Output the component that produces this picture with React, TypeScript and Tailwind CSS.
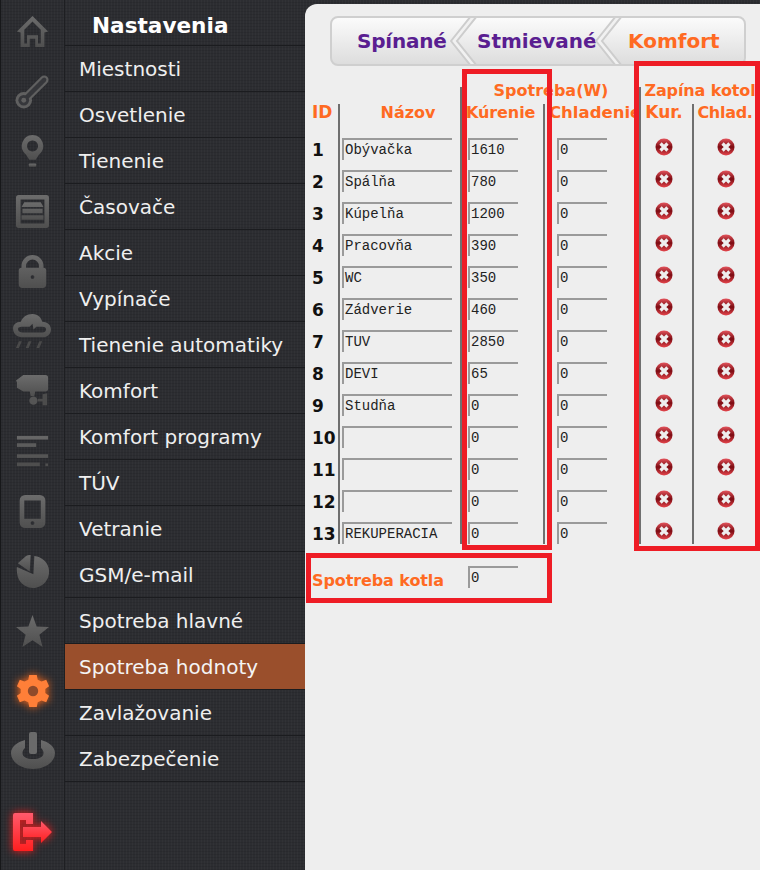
import type { ReactNode } from "react";

const menu = [
  "Miestnosti",
  "Osvetlenie",
  "Tienenie",
  "Časovače",
  "Akcie",
  "Vypínače",
  "Tienenie automatiky",
  "Komfort",
  "Komfort programy",
  "TÚV",
  "Vetranie",
  "GSM/e-mail",
  "Spotreba hlavné",
  "Spotreba hodnoty",
  "Zavlažovanie",
  "Zabezpečenie",
];

const rows = [
  { name: "Obývačka", heat: "1610" },
  { name: "Spálňa", heat: "780" },
  { name: "Kúpelňa", heat: "1200" },
  { name: "Pracovňa", heat: "390" },
  { name: "WC", heat: "350" },
  { name: "Zádverie", heat: "460" },
  { name: "TUV", heat: "2850" },
  { name: "DEVI", heat: "65" },
  { name: "Studňa", heat: "0" },
  { name: "", heat: "0" },
  { name: "", heat: "0" },
  { name: "", heat: "0" },
  { name: "REKUPERACIA", heat: "0" },
];

const RAIL = "url(#rail)";

function Icon({ children }: { children: ReactNode }) {
  return (
    <svg width="33" height="33" viewBox="0 0 36 36" fill={RAIL}>
      {children}
    </svg>
  );
}

const icons: ReactNode[] = [
  // home
  <Icon key="home">
    <path d="M18 1 L35 18 L31 19 L31 35 L21 35 L21 26 L15 26 L15 35 L5 35 L5 19 L1 18 Z M18 7 L9 16 L9 31 L12 31 L12 22 L24 22 L24 31 L27 31 L27 16 Z" fillRule="evenodd" />
  </Icon>,
  // thermometer
  <svg key="thermo" width="35" height="35" viewBox="0 0 36 36">
    <path d="M9 27 L30 6" stroke="#606060" strokeWidth="9" strokeLinecap="round" />
    <circle cx="9" cy="27" r="8.500" fill="#606060" />
    <path d="M9 27 L30 6" stroke="#36373b" strokeWidth="4.500" strokeLinecap="round" />
    <circle cx="9" cy="27" r="5.500" fill="#36373b" />
    <circle cx="9" cy="27" r="2.500" fill="#606060" />
  </svg>,
  // bulb
  <Icon key="bulb">
    <path d="M18 0 A12 12 0 0 1 25 21.500 L21.500 27 L14.500 27 L11 21.500 A12 12 0 0 1 18 0 Z M18 6 A6 6 0 1 0 18.010 6 Z" fillRule="evenodd" />
    <rect x="14" y="31" width="8" height="3.500" rx="1" />
  </Icon>,
  // shutter
  <Icon key="shutter">
    <path d="M3 0 H33 A3 3 0 0 1 36 3 V33 A3 3 0 0 1 33 36 H3 A3 3 0 0 1 0 33 V3 A3 3 0 0 1 3 0 Z M5 5 V31 H31 V5 Z" fillRule="evenodd" />
    <path d="M9 8 H27 L30 13 H6 Z M7 15 H29 V20 H7 Z M6 22 H30 L30 27 H6 Z" />
  </Icon>,
  // lock
  <Icon key="lock">
    <path d="M18 0 A12 12 0 0 1 30 12 V14 A3 3 0 0 1 33 17 V32 A4 4 0 0 1 29 36 H7 A4 4 0 0 1 3 32 V17 A3 3 0 0 1 6 14 V12 A12 12 0 0 1 18 0 Z M18 5 A7 7 0 0 0 11 12 V14 H25 V12 A7 7 0 0 0 18 5 Z M18 22 A2 2 0 1 0 18.010 22 Z" fillRule="evenodd" />
  </Icon>,
  // cloud with rain
  <svg key="cloud" width="39" height="35" viewBox="0 0 40 36" fill={RAIL}>
    <path d="M20 0 C26 0 29 4 30 8 C36 8 39 12 39 16 C39 21 35 24 31 24 H9 C4 24 0 20 0 15 C0 11 3 8 8 8 C10 3 14 0 20 0 Z M10 13 C6 13 5 14 5 15.500 C5 18 7 19 10 19 H30 C33 19 34 18 34 15.500 C34 14 33 13 30 13 H24 L21 16 L20 10 L17 13 Z" fillRule="evenodd" />
    <path d="M3 35 L6 28 L9 28 L6 35 Z M13 35 L16 28 L19 28 L16 35 Z M24 35 L27 28 L30 28 L27 35 Z" fill="#4a4a4a" />
  </svg>,
  // camera
  <Icon key="camera">
    <path d="M8 0 H32 A3 3 0 0 1 35 3 V15 A3 3 0 0 1 32 18 H21 L20 23 H16 L15 18 H8 L1 14 V8 L0 6 Z" />
    <circle cx="19" cy="28" r="4.500" fill="#555555" />
    <path d="M24 26 H29 V21 L34 20 V33 L29 33 V29 H24 Z" fill="#4c4c4c" />
  </Icon>,
  // text lines
  <Icon key="lines">
    <rect x="1" y="1" width="34" height="4" fill="#666666" />
    <rect x="1" y="9" width="21" height="4" fill="#5c5c5c" />
    <rect x="1" y="21" width="34" height="4" fill="#555555" />
    <rect x="1" y="30" width="25" height="4" fill="#4e4e4e" />
    <rect x="32" y="31" width="3" height="3" fill="#4e4e4e" />
  </Icon>,
  // phone
  <Icon key="phone">
    <path d="M7 0 H23 A6 6 0 0 1 29 6 V30 A6 6 0 0 1 23 36 H7 A6 6 0 0 1 1 30 V6 A6 6 0 0 1 7 0 Z M6 6 V26 H24 V6 Z M15 28.500 A2 2 0 1 0 15.010 28.500 Z" fillRule="evenodd" transform="translate(3 0)" />
  </Icon>,
  // pie chart
  <Icon key="pie">
    <path d="M16 0 A10 10 0 0 0 11 1 L2 9 L15 18 Z" />
    <path d="M20 1 A17.500 17.500 0 1 1 2 24 C1 20 0.500 16 1 13 L19 21 Z" />
  </Icon>,
  // star
  <Icon key="star">
    <path d="M18 0 L22.500 12.500 L36 13 L25.500 21.500 L29 35 L18 27.500 L7 35 L10.500 21.500 L0 13 L13.500 12.500 Z" />
  </Icon>,
  // gear
  <div key="gear" className="[filter:drop-shadow(0_0_4px_#ff6a1a)]">
    <svg width="34" height="34" viewBox="0 0 36 36" fill="#ff7f38">
      <path d="M14 1 H22 L23 6 L27 8 L32 6 L35 13 L31 16 V20 L35 23 L32 30 L27 28 L23 30 L22 35 H14 L13 30 L9 28 L4 30 L1 23 L5 20 V16 L1 13 L4 6 L9 8 L13 6 Z" />
      <circle cx="18" cy="18" r="5.500" fill="#8f4a2a" />
    </svg>
  </div>,
  // power
  <svg key="power" width="44" height="38" viewBox="0 0 44 38" fill={RAIL}>
    <path d="M14 8 V16 C12.500 17 11.500 19 11.500 21 C11.500 25 16 27 22 27 C28 27 32.500 25 32.500 21 C32.500 19 31.500 17 30 16 V8 C38 10 44 15 44 21 C44 30 34 37 22 37 C10 37 0 30 0 21 C0 15 6 10 14 8 Z" />
    <rect x="18" y="0" width="8" height="22" rx="2" fill="#6a6a6a" />
  </svg>,
];

const Cell = ({ children, line, className = "" }: { children?: ReactNode; line?: boolean; className?: string }) => (
  <div className={`flex items-center ${line ? "border-l-2 border-[#6f6f6f]" : ""} ${className}`}>{children}</div>
);

function Field({ value, wide }: { value: string; wide?: boolean }) {
  return (
    <div
      className={`h-[22px] ${wide ? "w-[110px]" : "w-[50px]"} border-t-2 border-l-2 border-[#9a9a9a] pl-[1px] font-['Liberation_Mono',monospace] text-[14px] leading-[21px] font-normal whitespace-pre text-[#222222]`}
    >
      {value}
    </div>
  );
}

function RemoveIcon() {
  return (
    <svg width="18" height="18" viewBox="0 0 18 18">
      <defs>
        <linearGradient id="rem" x1="0" y1="0" x2="0" y2="1">
          <stop offset="0" stopColor="#e4545c" />
          <stop offset="0.5" stopColor="#7c0b12" />
          <stop offset="1" stopColor="#e5454c" />
        </linearGradient>
      </defs>
      <circle cx="9" cy="9" r="8.500" fill="url(#rem)" />
      <path d="M5.500 5.500 L12.500 12.500 M12.500 5.500 L5.500 12.500" stroke="#eeeeee" strokeWidth="3.200" />
    </svg>
  );
}

function TabSeparator() {
  return (
    <svg width="30" height="46" viewBox="0 0 30 46" className="-mr-[3px] shrink-0">
      <path d="M21 -2 L1 23 L21 48 H27 L7 23 L27 -2 Z" fill="#f1f1f1" />
      <path d="M21 -2 L1 23 L21 48" fill="none" stroke="#cdcdcd" strokeWidth="2" />
      <path d="M27 -2 L7 23 L27 48" fill="none" stroke="#cdcdcd" strokeWidth="2" />
    </svg>
  );
}

export default function App() {
  return (
    <div className="flex h-[870px] w-[760px] overflow-hidden bg-[#2c2d31] font-['DejaVu_Sans',sans-serif] bg-[repeating-linear-gradient(0deg,rgba(0,0,0,0.09)_0px,rgba(0,0,0,0.09)_1px,transparent_1px,transparent_3px),repeating-linear-gradient(90deg,rgba(255,255,255,0.025)_0px,rgba(255,255,255,0.025)_1px,transparent_1px,transparent_3px)]">
      <svg width="0" height="0" className="absolute">
        <defs>
          <linearGradient id="rail" x1="0" y1="0" x2="0" y2="1">
            <stop offset="0" stopColor="#6c6c6c" />
            <stop offset="1" stopColor="#4f4f4f" />
          </linearGradient>
          <linearGradient id="logout" x1="0" y1="0" x2="0" y2="1">
            <stop offset="0" stopColor="#ff5a6c" />
            <stop offset="1" stopColor="#ff1f1f" />
          </linearGradient>
        </defs>
      </svg>

      {/* Icon rail */}
      <aside className="flex h-full w-[64px] shrink-0 flex-col items-center border-l border-[#17181a] pt-[1px]">
        {icons.map((icon, i) => (
          <div key={i} className="flex h-[60px] shrink-0 items-center justify-center">
            {icon}
          </div>
        ))}
        <div className="mt-[21px] flex h-[60px] shrink-0 items-center justify-center [filter:drop-shadow(0_0_4px_#ff1a1a)]">
          <svg width="41" height="38" viewBox="0 0 41 38" fill="url(#logout)">
            <path d="M3 0 H21 V11 H14 V7 H8 V31 H14 V27 H21 V38 H3 A2 2 0 0 1 1 36 V2 A2 2 0 0 1 3 0 Z" />
            <path d="M11 14 H29 V8 L40 19 L29 30 V24 H11 Z" />
          </svg>
        </div>
      </aside>

      {/* Menu */}
      <nav className="w-[241px] shrink-0 border-l border-[#1e1f22]">
        <div className="h-[46px] border-b border-[#1b1c1f] pl-[27px] pt-[10px] text-[21.600px] leading-[32px] font-bold text-white">
          Nastavenia
        </div>
        {menu.map((label) => (
          <div
            key={label}
            className={`flex h-[46px] items-center border-b border-[#1b1c1f] pl-[14px] text-[20px] ${
              label === "Spotreba hodnoty" ? "bg-[#9a4f2c] text-[#f4f4f4]" : "text-[#efefef]"
            }`}
          >
            {label}
          </div>
        ))}
      </nav>

      {/* Content panel */}
      <main className="relative mt-[4px] flex-1 rounded-tl-[12px] bg-[#eeeeee] pl-[5px]">
        {/* Tabs */}
        <div className="ml-[20px] mt-[12px] flex h-[50px] w-[416px] items-center overflow-hidden rounded-[8px] border-2 border-[#cfcfcf] bg-gradient-to-b from-[#fbfbfb] to-[#dddddd] text-[20px] font-bold">
          <div className="w-[118px] shrink-0 pl-[25px] tracking-[-0.2px] text-[#5a1e91]">Spínané</div>
          <TabSeparator />
          <div className="w-[118px] shrink-0 whitespace-nowrap text-[#5a1e91]">Stmievané</div>
          <TabSeparator />
          <div className="flex-1 pl-[6px] text-[#ff6a22]">Komfort</div>
        </div>

        {/* Table */}
        <div className="mt-[21px] grid grid-cols-[28px_122px_83px_96px_53px_63px] text-[16px] leading-[23px] font-bold text-[#ff6a22]">
          <Cell />
          <Cell />
          <Cell line className="col-span-2 h-[17px] !items-start justify-center pl-[1px] whitespace-nowrap">
            <span className="-mt-[8px]">Spotreba(W)</span>
          </Cell>
          <Cell line className="col-span-2 !items-start justify-center pl-[4px] whitespace-nowrap">
            <span className="-mt-[8px] tracking-[-0.1px]">Zapína kotol</span>
          </Cell>

          <Cell className="h-[24px] !items-start pl-[2px]">
            <span className="-mt-[3px] text-[17px]">ID</span>
          </Cell>
          <Cell line className="!items-start justify-center pl-[16px]">
            <span className="-mt-[3px]">Názov</span>
          </Cell>
          <Cell line className="!items-start pl-[4px]">
            <span className="-mt-[3px] tracking-[-0.1px]">Kúrenie</span>
          </Cell>
          <Cell line className="!items-start pl-[4px] whitespace-nowrap">
            <span className="-mt-[3px] text-[16.500px]">Chladenie</span>
          </Cell>
          <Cell line className="!items-start justify-center pr-[5px]">
            <span className="-mt-[3px] text-[17px]">Kur.</span>
          </Cell>
          <Cell line className="!items-start justify-center pl-[1px]">
            <span className="-mt-[3px] tracking-[-0.3px]">Chlad.</span>
          </Cell>

          {rows.map((row, i) => (
            <div key={i} className="contents">
              <Cell className="h-[32px] pl-[2px] pt-[12px] text-[17px] text-[#111111]">{i + 1}</Cell>
              <Cell line className="!items-end pl-[2px]"><Field wide value={row.name} /></Cell>
              <Cell line className="!items-end pl-[6px]"><Field value={row.heat} /></Cell>
              <Cell line className="!items-end pl-[12px]"><Field value="0" /></Cell>
              <Cell line className="!items-start justify-center pr-[5px] pt-[10px]"><RemoveIcon /></Cell>
              <Cell line className="!items-start justify-center pl-[3px] pt-[10px]"><RemoveIcon /></Cell>
            </div>
          ))}
        </div>

        {/* Boiler consumption */}
        <div className="flex items-start pt-[22px]">
          <div className="w-[158px] pl-[2px] pt-[3px] text-[16px] leading-[23px] font-bold tracking-[-0.1px] text-[#ff6a22]">Spotreba kotla</div>
          <Field value="0" />
        </div>

        {/* Annotation frames */}
        <div className="absolute left-[157px] top-[65px] h-[481px] w-[90px] border-[5px] border-[#ee1c25]" />
        <div className="absolute left-[329px] top-[57px] h-[490px] w-[126px] border-[5px] border-[#ee1c25]" />
        <div className="absolute left-[1px] top-[549px] h-[50px] w-[246px] border-[5px] border-[#ee1c25]" />
      </main>
    </div>
  );
}
